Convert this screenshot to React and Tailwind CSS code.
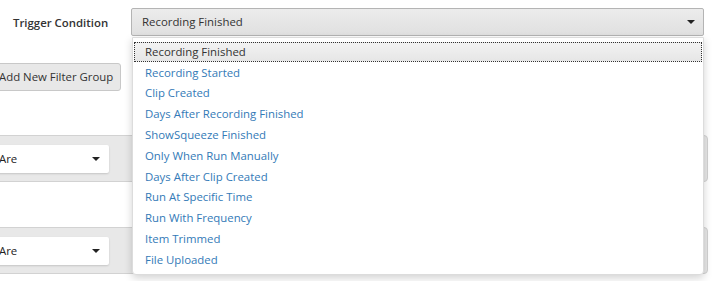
const options = [
  'Recording Finished',
  'Recording Started',
  'Clip Created',
  'Days After Recording Finished',
  'ShowSqueeze Finished',
  'Only When Run Manually',
  'Days After Clip Created',
  'Run At Specific Time',
  'Run With Frequency',
  'Item Trimmed',
  'File Uploaded',
];

function Caret() {
  return <span className="h-0 w-0 border-x-[4px] border-t-[4px] border-x-transparent border-t-[#222]" />;
}

function FilterRow() {
  return (
    <div className="ml-[-30px] flex h-[47px] w-[738px] items-center rounded-[4px] border border-[#d2d2d2] bg-[#e8e8e8]">
      <div className="ml-[8px] flex h-[28px] w-[130px] items-center justify-between rounded-[2px] bg-white pl-[20px] pr-[9px] text-[#222] shadow-[0_1px_2px_rgba(0,0,0,0.15)]">
        <span>Are</span>
        <Caret />
      </div>
    </div>
  );
}

export default function App() {
  return (
    <div className="relative h-[281px] w-[712px] overflow-hidden bg-white font-['Open_Sans',sans-serif] text-[11.4px] text-[#333]">
      <div className="flex items-center pt-[8px]">
        <div className="w-[131px] pl-[13px] pt-[1px] font-semibold">Trigger Condition</div>
        <div className="flex h-[28px] w-[573px] items-center justify-between rounded-[2px] border border-[#b4b4b4] bg-gradient-to-b from-[#ececec] to-[#e0e0e0] pl-[10px] pr-[8px]">
          <span>Recording Finished</span>
          <Caret />
        </div>
      </div>

      <div className="mt-[27px] ml-[-19px] flex h-[28px] w-[140px] items-center rounded-[3px] border border-[#c8c8c8] bg-[#e8e8e8] pl-[17px]">
        Add New Filter Group
      </div>

      <div className="mt-[44px]">
        <FilterRow />
      </div>
      <div className="mt-[45px]">
        <FilterRow />
      </div>

      <div className="absolute left-[132px] top-[37px] h-[238px] w-[572px] rounded-b-[4px] border border-[#dcdcdc] bg-white pt-[4px] shadow-[0_3px_8px_rgba(0,0,0,0.18)]">
        {options.map((o, i) => (
          <div key={o} className="h-[20.8px] px-[1px]">
            {i === 0 ? (
              <div className="flex h-[20px] items-center border border-dotted border-[#333] bg-gradient-to-b from-[#f2f2f2] to-[#e6e6e6] pl-[10px] text-[#333]">
                {o}
              </div>
            ) : (
              <div className="flex h-[20.8px] -translate-y-[1px] items-center pl-[11px] text-[#337ab7]">{o}</div>
            )}
          </div>
        ))}
      </div>
    </div>
  );
}
